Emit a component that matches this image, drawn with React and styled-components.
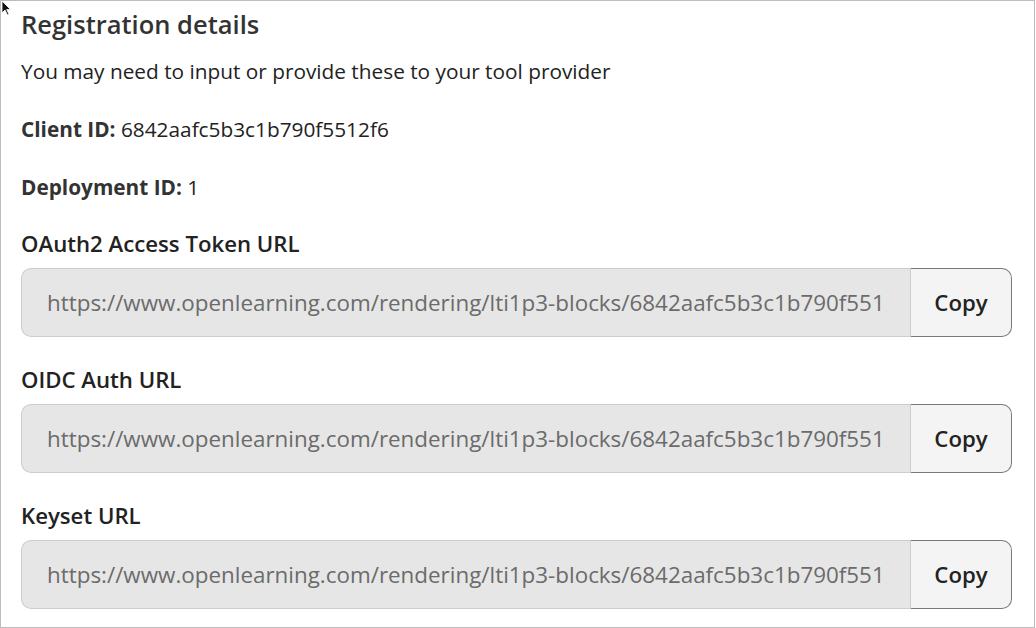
import React from 'react'
import styled, { createGlobalStyle } from 'styled-components'

const GlobalStyle = createGlobalStyle`
  html, body {
    margin: 0;
    padding: 0;
    background: #fff;
  }
  body {
    font-family: "Open Sans", "Noto Sans", "Liberation Sans", sans-serif;
    color: #222;
  }
`

const Frame = styled.div`
  position: relative;
  width: 1035px;
  height: 628px;
  box-sizing: border-box;
  border: 1px solid #bdbdbd;
  padding: 8px 22px 0 20px;
  overflow: hidden;
`

const Title = styled.h2`
  margin: 0;
  font-size: 25.5px;
  line-height: 30px;
  font-weight: 600;
  color: #333;
`

const Text = styled.p`
  margin: ${p => p.$gap || 30}px 0 0;
  font-size: 20.8px;
  line-height: 28px;
  color: #222;

  strong {
    font-weight: 700;
    color: #333;
  }
`

const Field = styled.div`
  margin-top: 28px;
`

const Label = styled.div`
  font-size: 22.2px;
  line-height: 30px;
  font-weight: 600;
  color: #222;
  margin-bottom: 9px;
`

const Group = styled.div`
  display: flex;
  height: 69px;
`

const Url = styled.div`
  flex: 1;
  min-width: 0;
  box-sizing: border-box;
  display: flex;
  align-items: center;
  padding: 0 20px 0 25px;
  background: #e6e6e6;
  border: 1px solid #cdcdcd;
  border-right: none;
  border-radius: 10px 0 0 10px;
  font-size: 22.4px;
  color: #6b6b6b;
  white-space: nowrap;
  overflow: hidden;
`

const CopyButton = styled.button`
  width: 102px;
  box-sizing: border-box;
  background: #f4f4f4;
  border: 1px solid #7a7a7a;
  border-left: 1px solid #cdcdcd;
  border-radius: 0 10px 10px 0;
  font-family: inherit;
  font-size: 22.2px;
  font-weight: 600;
  color: #222;
  padding: 0;
  cursor: pointer;
`

const Pointer = styled.svg`
  position: absolute;
  left: 0;
  top: 0;
`

const url = 'https://www.openlearning.com/rendering/lti1p3-blocks/6842aafc5b3c1b790f551'

const fields = ['OAuth2 Access Token URL', 'OIDC Auth URL', 'Keyset URL']

export default function App() {
  return (
    <>
      <GlobalStyle />
      <Frame>
        <Title>Registration details</Title>
        <Text $gap={18}>You may need to input or provide these to your tool provider</Text>
        <Text><strong>Client ID:</strong> 6842aafc5b3c1b790f5512f6</Text>
        <Text><strong>Deployment ID:</strong> 1</Text>
        {fields.map(label => (
          <Field key={label}>
            <Label>{label}</Label>
            <Group>
              <Url>{url}</Url>
              <CopyButton>Copy</CopyButton>
            </Group>
          </Field>
        ))}
        <Pointer width="12" height="16" viewBox="0 0 12 16">
          <path d="M1 0 L1 12 L4 9 L6.5 14 L8 13.3 L5.7 8.5 L9.5 8.5 Z" fill="#111" stroke="#fff" strokeWidth="0.8" />
        </Pointer>
      </Frame>
    </>
  )
}
